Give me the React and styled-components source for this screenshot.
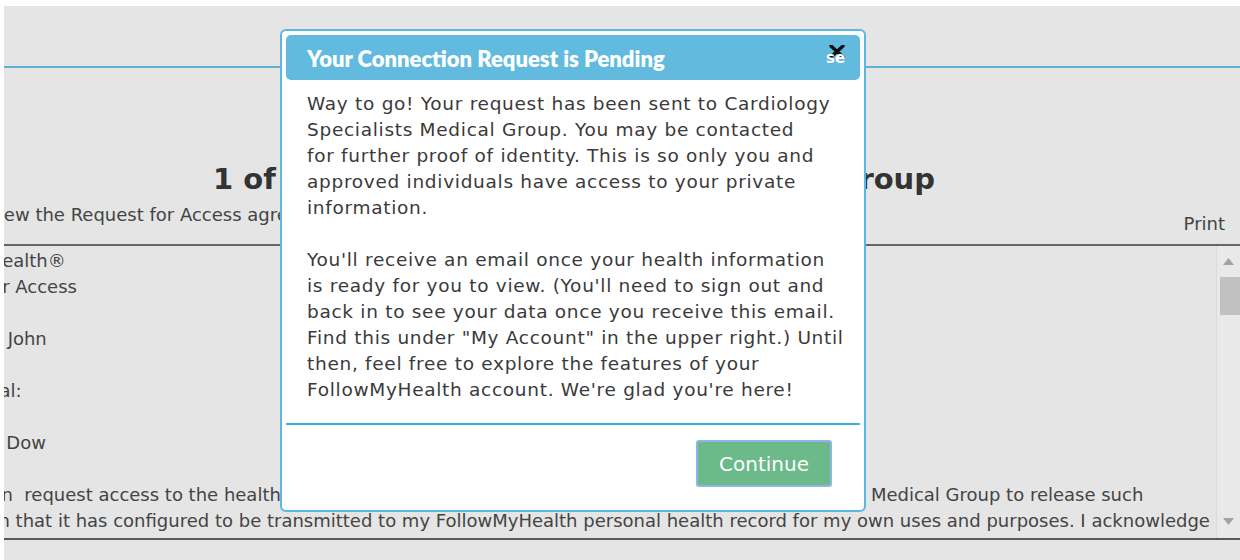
import React from "react";
import styled, { createGlobalStyle } from "styled-components";

const GlobalStyle = createGlobalStyle`
  html, body {
    margin: 0;
    padding: 0;
    background: #ffffff;
  }
  body {
    font-family: "DejaVu Sans", "Liberation Sans", sans-serif;
  }
`;

const DOC_SHIFT = "-98px";

const Page = styled.div`
  width: 1240px;
  height: 560px;
  padding: 6px 0 0 4px;
  box-sizing: border-box;
  overflow: hidden;
`;

const Stage = styled.div`
  position: relative;
  height: 554px;
  background: #e5e5e5;
  overflow: hidden;
  color: #444;
`;

const TopBar = styled.div`
  height: 60px;
  border-bottom: 2px solid #5fb0d2;
`;

const Heading = styled.h1`
  margin: 0;
  padding: 90px 0 0 209px;
  height: 42px;
  font-size: 29px;
  line-height: 42px;
  font-weight: bold;
  color: #333;
  white-space: nowrap;
`;

const SubRow = styled.div`
  display: flex;
  justify-content: space-between;
  align-items: flex-start;
  height: 44px;
  font-size: 18px;
  white-space: nowrap;
`;

const Intro = styled.p`
  margin: 0 0 0 ${DOC_SHIFT};
  padding-top: 3px;
  line-height: 24px;
`;

const PrintLink = styled.span`
  padding: 12px 15px 0 0;
  line-height: 24px;
`;

const ScrollBox = styled.div`
  display: flex;
  height: 292px;
  border-top: 2px solid #666;
  border-bottom: 2px solid #5a5a5a;
`;

const Agreement = styled.div`
  flex: 1;
  overflow: hidden;
  padding-top: 2px;
  font-size: 18px;
  line-height: 26px;
  white-space: nowrap;
`;

const AgreementLine = styled.div`
  margin-left: ${DOC_SHIFT};
  height: 26px;
`;

const Track = styled.div`
  width: 23px;
  display: flex;
  flex-direction: column;
  background: #e9e9e9;
  border-left: 1px solid #dadada;
`;

const Arrow = styled.div`
  height: ${(p) => p.$h}px;
  display: flex;
  align-items: center;
  justify-content: center;
`;

const Thumb = styled.div`
  width: 20px;
  margin-left: 3px;
  height: 38px;
  background: #c1c1c1;
`;

const TrackFill = styled.div`
  flex: 1;
`;

/* dialog */

const Dialog = styled.div`
  position: absolute;
  left: 276px;
  top: 23px;
  width: 586px;
  height: 483px;
  box-sizing: border-box;
  padding: 4px;
  background: #fff;
  border: 2px solid #5cb8e0;
  border-radius: 6px;
  display: flex;
  flex-direction: column;
`;

const DialogHeader = styled.div`
  height: 45px;
  flex-shrink: 0;
  display: flex;
  align-items: center;
  justify-content: space-between;
  padding: 0 14px 0 21px;
  background: #62bade;
  border-radius: 5px;
`;

const DialogTitle = styled.span`
  font-family: "Lato", "DejaVu Sans", sans-serif;
  font-weight: 800;
  font-size: 22px;
  color: #fff;
  margin-top: 1px;
`;

const CloseButton = styled.button`
  position: relative;
  width: 20px;
  height: 20px;
  margin-bottom: 6px;
  padding: 0;
  border: 0;
  background: transparent;
  cursor: pointer;
`;

const CloseLabel = styled.span`
  position: absolute;
  left: 0;
  top: 6px;
  font-family: "DejaVu Sans", sans-serif;
  font-weight: bold;
  font-size: 15px;
  line-height: 15px;
  color: #fff;
`;

const CloseIcon = styled.svg`
  position: absolute;
  left: 3px;
  top: 0;
`;

const DialogBody = styled.div`
  box-sizing: border-box;
  padding: 11px 21px 0;
  height: 343px;
  flex-shrink: 0;
  font-size: 18.5px;
  letter-spacing: 0.7px;
  line-height: 26px;
  color: #3a3a3a;
  white-space: nowrap;
`;

const Para = styled.p`
  margin: 0 0 26px;
`;

const DialogFooter = styled.div`
  border-top: 2px solid #3aafe0;
  display: flex;
  justify-content: flex-end;
  padding: 15px 28px 0 0;
`;

const ContinueButton = styled.button`
  width: 136px;
  height: 47px;
  background: #6cb98a;
  border: 2px solid #8fb6ea;
  border-radius: 3px;
  color: #fff;
  font-family: "DejaVu Sans", sans-serif;
  font-size: 20px;
  cursor: pointer;
`;

const Triangle = ({ down }) => (
  <svg width="11" height="7" viewBox="0 0 11 7">
    <polygon
      points={down ? "0,0 11,0 5.5,7" : "0,7 11,7 5.5,0"}
      fill="#a3a3a3"
    />
  </svg>
);

export default function App() {
  return (
    <Page>
      <GlobalStyle />
      <Stage>
        <TopBar />
        <Heading>1 of 1: Cardiology Specialists Medical Group</Heading>
        <SubRow>
          <Intro>Please review the Request for Access agreement below and accept to continue.</Intro>
          <PrintLink>Print</PrintLink>
        </SubRow>
        <ScrollBox>
          <Agreement>
            <AgreementLine>FollowMyHealth®</AgreementLine>
            <AgreementLine>Request for Access</AgreementLine>
            <AgreementLine />
            <AgreementLine>Forename: John</AgreementLine>
            <AgreementLine />
            <AgreementLine>Client Portal:</AgreementLine>
            <AgreementLine />
            <AgreementLine>Lastname: Dow</AgreementLine>
            <AgreementLine />
            <AgreementLine>
              Today, I can&nbsp; request access to the health information maintained by, and authorize Cardiology Specialists Medical Group to release such
            </AgreementLine>
            <AgreementLine>
              information that it has configured to be transmitted to my FollowMyHealth personal health record for my own uses and purposes. I acknowledge
            </AgreementLine>
          </Agreement>
          <Track>
            <Arrow $h={31}>
              <Triangle />
            </Arrow>
            <Thumb />
            <TrackFill />
            <Arrow $h={34}>
              <Triangle down />
            </Arrow>
          </Track>
        </ScrollBox>

        <Dialog role="dialog" aria-labelledby="pending-title">
          <DialogHeader>
            <DialogTitle id="pending-title">Your Connection Request is Pending</DialogTitle>
            <CloseButton aria-label="Close">
              <CloseIcon width="16" height="13" viewBox="0 0 16 13">
                <path d="M2 1 L14 12 M14 1 L2 12" stroke="#111" strokeWidth="3.4" strokeLinecap="round" />
              </CloseIcon>
              <CloseLabel>se</CloseLabel>
            </CloseButton>
          </DialogHeader>
          <DialogBody>
            <Para>
              Way to go! Your request has been sent to Cardiology
              <br />
              Specialists Medical Group. You may be contacted
              <br />
              for further proof of identity. This is so only you and
              <br />
              approved individuals have access to your private
              <br />
              information.
            </Para>
            <Para>
              You'll receive an email once your health information
              <br />
              is ready for you to view. (You'll need to sign out and
              <br />
              back in to see your data once you receive this email.
              <br />
              Find this under "My Account" in the upper right.) Until
              <br />
              then, feel free to explore the features of your
              <br />
              FollowMyHealth account. We're glad you're here!
            </Para>
          </DialogBody>
          <DialogFooter>
            <ContinueButton>Continue</ContinueButton>
          </DialogFooter>
        </Dialog>
      </Stage>
    </Page>
  );
}
